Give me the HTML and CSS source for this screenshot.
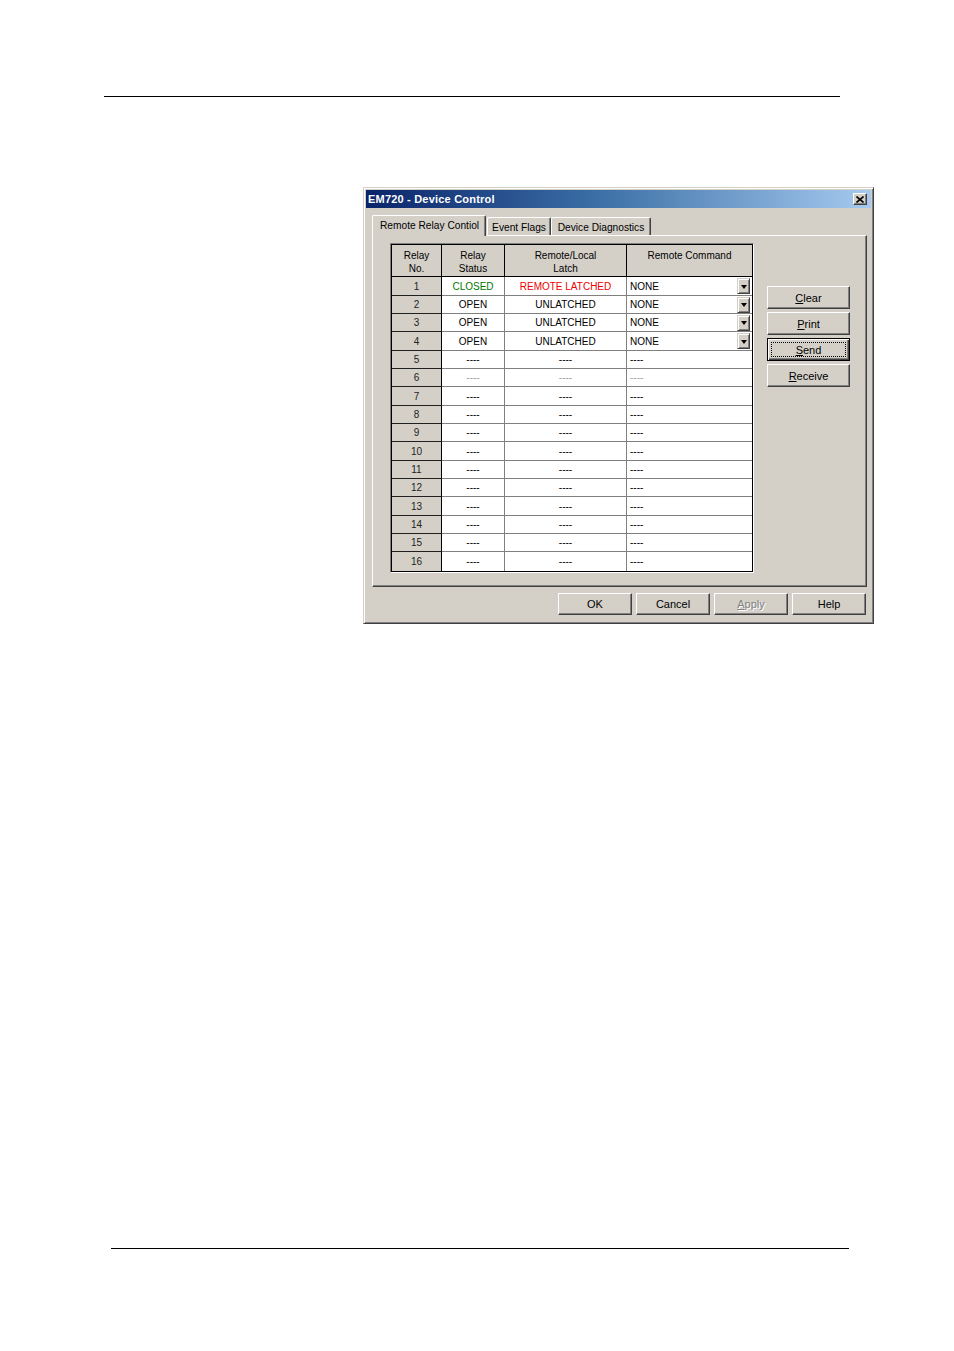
FILE: index.html
```html
<!DOCTYPE html>
<html>
<head>
<meta charset="utf-8">
<title>EM720 - Device Control</title>
<link rel="stylesheet" href="styles.css">
</head>
<body>
<div class="page">
  <div class="rule rule-top"></div>

  <div class="dialog">
    <div class="titlebar">
      <span class="title">EM720 - Device Control</span>
      <span class="close-btn">
        <svg width="8" height="7" viewBox="0 0 8 7"><path d="M0.5 0.5 L7.5 6.5 M7.5 0.5 L0.5 6.5" stroke="#000" stroke-width="1.6" fill="none"/></svg>
      </span>
    </div>

    <div class="dlg-body">
      <div class="tabs">
        <div class="tab tab-active tab-w1">Remote Relay Contiol</div>
        <div class="tab tab-w2 tab-after-active">Event Flags</div>
        <div class="tab tab-w3">Device Diagnostics</div>
      </div>

      <div class="panel">
        <div class="grid-wrap">
          <div class="grid">
            <div class="hrow">
              <div class="hc c1">Relay<br>No.</div>
              <div class="hc c2">Relay<br>Status</div>
              <div class="hc c3">Remote/Local<br>Latch</div>
              <div class="hc c4">Remote Command</div>
            </div>

            <div class="row"><div class="fc c1">1</div><div class="dc c2 green">CLOSED</div><div class="dc c3 red">REMOTE LATCHED</div><div class="dc c4 cmd"><span>NONE</span><span class="combo"><i></i></span></div></div>
            <div class="row"><div class="fc c1">2</div><div class="dc c2">OPEN</div><div class="dc c3">UNLATCHED</div><div class="dc c4 cmd"><span>NONE</span><span class="combo"><i></i></span></div></div>
            <div class="row"><div class="fc c1">3</div><div class="dc c2">OPEN</div><div class="dc c3">UNLATCHED</div><div class="dc c4 cmd"><span>NONE</span><span class="combo"><i></i></span></div></div>
            <div class="row"><div class="fc c1">4</div><div class="dc c2">OPEN</div><div class="dc c3">UNLATCHED</div><div class="dc c4 cmd"><span>NONE</span><span class="combo"><i></i></span></div></div>
            <div class="row"><div class="fc c1">5</div><div class="dc c2">----</div><div class="dc c3">----</div><div class="dc c4 left">----</div></div>
            <div class="row dim"><div class="fc c1">6</div><div class="dc c2">----</div><div class="dc c3">----</div><div class="dc c4 left">----</div></div>
            <div class="row"><div class="fc c1">7</div><div class="dc c2">----</div><div class="dc c3">----</div><div class="dc c4 left">----</div></div>
            <div class="row"><div class="fc c1">8</div><div class="dc c2">----</div><div class="dc c3">----</div><div class="dc c4 left">----</div></div>
            <div class="row"><div class="fc c1">9</div><div class="dc c2">----</div><div class="dc c3">----</div><div class="dc c4 left">----</div></div>
            <div class="row"><div class="fc c1">10</div><div class="dc c2">----</div><div class="dc c3">----</div><div class="dc c4 left">----</div></div>
            <div class="row"><div class="fc c1">11</div><div class="dc c2">----</div><div class="dc c3">----</div><div class="dc c4 left">----</div></div>
            <div class="row"><div class="fc c1">12</div><div class="dc c2">----</div><div class="dc c3">----</div><div class="dc c4 left">----</div></div>
            <div class="row"><div class="fc c1">13</div><div class="dc c2">----</div><div class="dc c3">----</div><div class="dc c4 left">----</div></div>
            <div class="row"><div class="fc c1">14</div><div class="dc c2">----</div><div class="dc c3">----</div><div class="dc c4 left">----</div></div>
            <div class="row"><div class="fc c1">15</div><div class="dc c2">----</div><div class="dc c3">----</div><div class="dc c4 left">----</div></div>
            <div class="row last"><div class="fc c1">16</div><div class="dc c2">----</div><div class="dc c3">----</div><div class="dc c4 left">----</div></div>
          </div>
        </div>

        <div class="side-buttons">
          <div class="btn btn-side"><span><u>C</u>lear</span></div>
          <div class="btn btn-side"><span><u>P</u>rint</span></div>
          <div class="btn btn-side btn-default"><span class="focus"><u>S</u>end</span></div>
          <div class="btn btn-side"><span><u>R</u>eceive</span></div>
        </div>
      </div>

      <div class="footer">
        <div class="btn btn-foot">OK</div>
        <div class="btn btn-foot">Cancel</div>
        <div class="btn btn-foot disabled"><span><u>A</u>pply</span></div>
        <div class="btn btn-foot">Help</div>
      </div>
    </div>
  </div>

  <div class="rule rule-bottom"></div>
</div>
</body>
</html>
```

FILE: styles.css
```css
html, body {
  margin: 0;
  padding: 0;
  background: #ffffff;
}

.page {
  width: 954px;
  height: 1351px;
  overflow: hidden;
  font-family: "Liberation Sans", Arial, sans-serif;
  color: #000;
}

.rule {
  height: 0;
  border-top: 1px solid #000;
}

.rule-top {
  margin: 96px 0 0 104px;
  width: 736px;
}

.rule-bottom {
  margin: 624px 0 0 111px;
  width: 738px;
}

/* ---------- dialog window ---------- */
.dialog {
  margin: 90px 0 0 363px;
  width: 511px;
  height: 437px;
  box-sizing: border-box;
  background: #d4d0c8;
  border: 1px solid;
  border-color: #d4d0c8 #404040 #404040 #d4d0c8;
  box-shadow: inset 1px 1px #ffffff, inset -1px -1px #808080;
  padding: 2px;
}

.titlebar {
  height: 18px;
  background: linear-gradient(to right, #0a246a 0%, #3a6ea5 45%, #a6caf0 100%);
  display: flex;
  align-items: center;
  justify-content: space-between;
  padding: 0 4px 0 2px;
}

.title {
  color: #ffffff;
  font-weight: bold;
  font-size: 11px;
  line-height: 18px;
  letter-spacing: 0.2px;
}

.close-btn {
  width: 14px;
  height: 12px;
  box-sizing: border-box;
  background: #d4d0c8;
  border: 1px solid;
  border-color: #ffffff #404040 #404040 #ffffff;
  box-shadow: inset -1px -1px #808080;
  display: flex;
  align-items: center;
  justify-content: center;
}

.close-btn svg {
  display: block;
  margin-left: -1px;
}

.dlg-body {
  padding: 7px 5px 0 6px;
}

/* ---------- tabs ---------- */
.tabs {
  display: flex;
  align-items: flex-end;
  height: 20px;
}

.tab {
  box-sizing: border-box;
  height: 18px;
  background: #d4d0c8;
  border-top: 1px solid #ffffff;
  border-left: 1px solid #ffffff;
  border-right: 1px solid #404040;
  box-shadow: inset -1px 0 #808080;
  border-radius: 2px 2px 0 0;
  font-size: 10.2px;
  line-height: 13px;
  padding-top: 3px;
  text-align: center;
  white-space: nowrap;
}

.tab-active {
  height: 21px;
  margin-bottom: -1px;
  position: relative;
  z-index: 1;
  padding-top: 3px;
  text-align: left;
  padding-left: 7px;
}

.tab-w1 { width: 114px; }
.tab-w2 { width: 64px; }
.tab-w3 { width: 100px; }
.tab-after-active { margin-left: 1px; }

/* ---------- tab panel ---------- */
.panel {
  width: 495px;
  height: 352px;
  box-sizing: border-box;
  border: 1px solid;
  border-color: #ffffff #404040 #404040 #ffffff;
  box-shadow: inset -1px -1px #808080;
  padding: 7px 0 0 17px;
  display: flex;
  align-items: flex-start;
}

/* ---------- grid ---------- */
.grid-wrap {
  border: 1px solid;
  border-color: #808080 #ffffff #ffffff #808080;
}

.grid {
  border: 1px solid #000;
  background: #ffffff;
  width: 360px;
  font-size: 10px;
}

.hrow {
  display: flex;
  height: 32px;
  box-sizing: border-box;
  border-bottom: 1px solid #000;
  background: #d4d0c8;
}

.hc {
  box-sizing: border-box;
  text-align: center;
  line-height: 13px;
  padding-top: 4px;
  border-right: 1px solid #000;
  color: #000;
}

.hc.c4 { border-right: none; }

.c1 { width: 50px; }
.c2 { width: 63px; }
.c3 { width: 122px; }
.c4 { width: 125px; }

.row {
  display: flex;
  height: 18px;
  box-sizing: border-box;
}

.row:nth-child(3n+2) { height: 19px; }

.fc, .dc {
  box-sizing: border-box;
  height: 100%;
  display: flex;
  align-items: center;
  justify-content: center;
  white-space: nowrap;
}

.fc {
  background: #d4d0c8;
  border-right: 1px solid #000;
  border-bottom: 1px solid #202020;
  color: #222;
}

.dc {
  border-right: 1px solid #808080;
  border-bottom: 1px solid #808080;
}

.dc.c4 { border-right: none; }

.row.last .fc,
.row.last .dc { border-bottom: none; }

.dc.left {
  justify-content: flex-start;
  padding-left: 3px;
}

.dc.cmd {
  justify-content: space-between;
  padding-left: 3px;
  padding-right: 2px;
}

.green { color: #007a00; }
.red { color: #ee0000; }
.row.dim .dc { color: #a0a0a0; }

.combo {
  width: 13px;
  height: 16px;
  box-sizing: border-box;
  background: #d4d0c8;
  border: 1px solid;
  border-color: #d4d0c8 #404040 #404040 #d4d0c8;
  box-shadow: inset 1px 1px #ffffff, inset -1px -1px #808080;
  display: flex;
  align-items: center;
  justify-content: center;
}

.combo i {
  display: block;
  width: 0;
  height: 0;
  border-left: 3.5px solid transparent;
  border-right: 3.5px solid transparent;
  border-top: 4px solid #000;
  margin-top: 1px;
}

/* ---------- buttons ---------- */
.btn {
  box-sizing: border-box;
  background: #d4d0c8;
  border: 1px solid;
  border-color: #ffffff #404040 #404040 #ffffff;
  box-shadow: inset -1px -1px #808080;
  display: flex;
  align-items: center;
  justify-content: center;
  font-size: 11px;
  white-space: nowrap;
}

.side-buttons {
  margin: 43px 0 0 13px;
  display: flex;
  flex-direction: column;
  gap: 3px;
}

.btn-side {
  width: 83px;
  height: 23px;
}

.btn-default {
  border: 1px solid #000;
  box-shadow: inset 1px 1px #ffffff, inset -1px -1px #404040, inset -2px -2px #808080;
}

.focus {
  box-sizing: border-box;
  width: 75px;
  height: 15px;
  border: 1px dotted #000;
  display: flex;
  align-items: center;
  justify-content: center;
}

.footer {
  display: flex;
  justify-content: flex-end;
  gap: 4px;
  margin-top: 6px;
}

.btn-foot {
  width: 74px;
  height: 22px;
}

.btn.disabled {
  color: #808080;
  text-shadow: 1px 1px #ffffff;
}
```
